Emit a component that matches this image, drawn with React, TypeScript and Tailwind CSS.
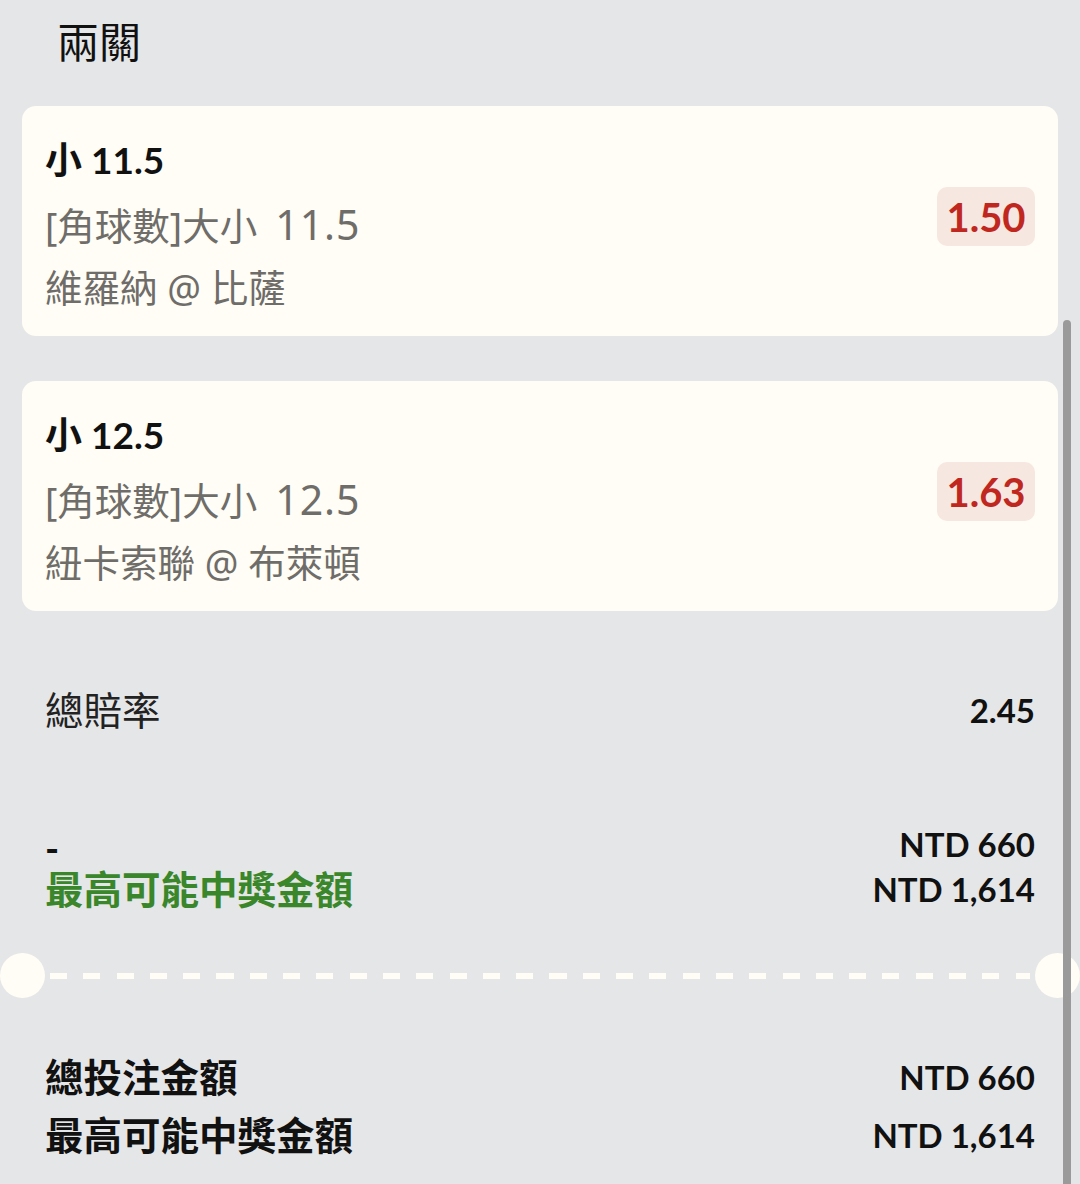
const font = "font-['Lato','Noto_Sans_CJK_TC',sans-serif]";
const sub = "font-['Noto_Sans','Noto_Sans_CJK_TC',sans-serif]";

const legs = [
  { pick: "小 11.5", market: "[角球數]大小", line: "11.5", match: "維羅納 @ 比薩", odds: "1.50" },
  { pick: "小 12.5", market: "[角球數]大小", line: "12.5", match: "紐卡索聯 @ 布萊頓", odds: "1.63" },
];

const LegCard = ({ pick, market, line, match, odds }: (typeof legs)[number]) => (
  <div className="flex items-center justify-between h-[230px] rounded-[14px] bg-[#fffdf5] pl-[23px] pr-[23px]">
    <div className="flex flex-col pt-[5px]">
      <div className="h-[64px] leading-[64px] text-[37px] font-bold text-[#111]">{pick}</div>
      <div className={`h-[64px] leading-[64px] text-[37.5px] text-[#6f6d69] ${sub}`}>
        {market}
        <span className="ml-[18px] text-[41px] tracking-[1px]">{line}</span>
      </div>
      <div className={`h-[64px] leading-[64px] text-[37.5px] text-[#6f6d69] ${sub}`}>{match}</div>
    </div>
    <div className="mb-[9px] flex h-[59px] w-[98px] items-center justify-center rounded-[10px] bg-[#f7e7e1] text-[40px] font-bold text-[#c0281f]">
      {odds}
    </div>
  </div>
);

export default function App() {
  return (
    <div className={`relative min-h-[1184px] w-[1080px] overflow-hidden bg-[#e5e6e8] ${font}`}>
      {/* header */}
      <div className="flex h-[106px] items-start pl-[57px] pt-[14px]">
        <span className="text-[42px] leading-[56px] text-[#111]">兩關</span>
      </div>

      {/* legs */}
      <div className="flex flex-col gap-[45px] px-[22px]">
        {legs.map((leg) => (
          <LegCard key={leg.pick} {...leg} />
        ))}
      </div>

      {/* total odds */}
      <div className="mt-[74px] flex h-[50px] items-center justify-between pl-[45px] pr-[45px]">
        <span className="text-[38.5px] leading-[50px] text-[#222]">總賠率</span>
        <span className="text-[33px] font-bold leading-[50px] text-[#111]">2.45</span>
      </div>

      {/* stake / potential win */}
      <div className="mt-[87px] flex flex-col pl-[45px] pr-[45px]">
        <div className="flex h-[45px] items-center justify-between">
          <span className="mt-[6px] text-[38px] font-bold leading-[30px] text-[#111]">-</span>
          <span className="text-[33px] font-bold leading-[45px] text-[#111]">NTD 660</span>
        </div>
        <div className="flex h-[45px] items-center justify-between">
          <span className="text-[38.5px] font-bold leading-[45px] text-[#3a862a]">最高可能中獎金額</span>
          <span className="text-[33px] font-bold leading-[45px] text-[#111]">NTD 1,614</span>
        </div>
      </div>

      {/* ticket divider */}
      <div className="mt-[41px] flex h-[45px] items-center">
        <div className="h-[45px] w-[45px] shrink-0 rounded-full bg-[#fffdf5]" />
        <div className="mx-[5px] h-[6px] flex-1 bg-[repeating-linear-gradient(to_right,#fffdf5_0_17px,transparent_17px_33.3px)]" />
        <div className="h-[45px] w-[45px] shrink-0 rounded-full bg-[#fffdf5]" />
      </div>

      {/* totals */}
      <div className="mt-[50px] flex flex-col pl-[45px] pr-[45px]">
        <div className="flex h-[58px] items-center justify-between">
          <span className="text-[38.5px] font-bold leading-[58px] text-[#111]">總投注金額</span>
          <span className="text-[33px] font-bold leading-[58px] text-[#111]">NTD 660</span>
        </div>
        <div className="flex h-[58px] items-center justify-between">
          <span className="text-[38.5px] font-bold leading-[58px] text-[#111]">最高可能中獎金額</span>
          <span className="text-[33px] font-bold leading-[58px] text-[#111]">NTD 1,614</span>
        </div>
      </div>

      {/* scrollbar thumb */}
      <div className="absolute right-[9px] top-[320px] h-[900px] w-[8px] rounded-full bg-[#9a9a9a]" />
    </div>
  );
}
